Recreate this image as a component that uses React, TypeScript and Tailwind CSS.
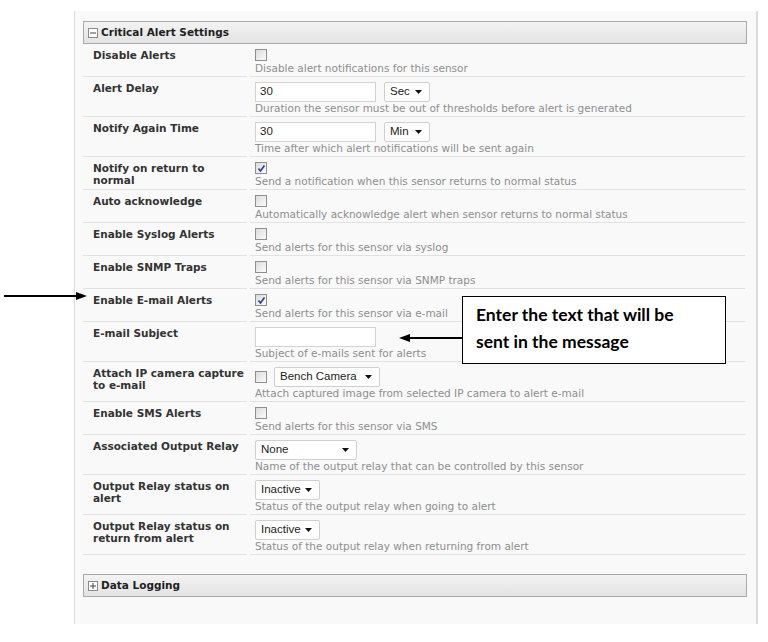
import type { ReactNode } from "react";

const labelFont = "font-['DejaVu_Sans',Verdana,sans-serif]";
const ctrlFont = "font-['Liberation_Sans',Arial,sans-serif]";

function Checkbox({ checked = false }: { checked?: boolean }) {
  return (
    <span className="flex h-[12px] w-[12px] items-center justify-center border border-[#8e8f8f] bg-gradient-to-br from-[#dcdcdc] to-[#fbfbfb]">
      {checked && (
        <svg width="9" height="9" viewBox="0 0 9 9">
          <path d="M1.5 4.5 L3.5 7 L7.5 1.5" fill="none" stroke="#2c3f8c" strokeWidth="1.6" />
        </svg>
      )}
    </span>
  );
}

function Select({ value, width }: { value: string; width: string }) {
  return (
    <span
      className={`flex h-[20px] items-center justify-between rounded-[2px] border border-[#cfcfcf] bg-white pl-[5px] pr-[7px] text-[11.5px] text-[#222] ${ctrlFont} ${width}`}
    >
      {value}
      <svg width="7" height="4" viewBox="0 0 7 4">
        <path d="M0 0 H7 L3.5 4 Z" fill="#111" />
      </svg>
    </span>
  );
}

function TextInput({ value = "" }: { value?: string }) {
  return (
    <span
      className={`flex h-[20px] w-[121px] items-center border border-[#d3d3d3] bg-white pl-[4px] text-[11.5px] text-[#222] ${ctrlFont}`}
    >
      {value}
    </span>
  );
}

type Row = { label: string[]; desc: string; control: ReactNode };

const rows: Row[] = [
  { label: ["Disable Alerts"], desc: "Disable alert notifications for this sensor", control: <Checkbox /> },
  {
    label: ["Alert Delay"],
    desc: "Duration the sensor must be out of thresholds before alert is generated",
    control: (
      <div className="flex gap-[8px]">
        <TextInput value="30" />
        <Select value="Sec" width="w-[46px]" />
      </div>
    ),
  },
  {
    label: ["Notify Again Time"],
    desc: "Time after which alert notifications will be sent again",
    control: (
      <div className="flex gap-[8px]">
        <TextInput value="30" />
        <Select value="Min" width="w-[46px]" />
      </div>
    ),
  },
  {
    label: ["Notify on return to", "normal"],
    desc: "Send a notification when this sensor returns to normal status",
    control: <Checkbox checked />,
  },
  {
    label: ["Auto acknowledge"],
    desc: "Automatically acknowledge alert when sensor returns to normal status",
    control: <Checkbox />,
  },
  { label: ["Enable Syslog Alerts"], desc: "Send alerts for this sensor via syslog", control: <Checkbox /> },
  { label: ["Enable SNMP Traps"], desc: "Send alerts for this sensor via SNMP traps", control: <Checkbox /> },
  { label: ["Enable E-mail Alerts"], desc: "Send alerts for this sensor via e-mail", control: <Checkbox checked /> },
  { label: ["E-mail Subject"], desc: "Subject of e-mails sent for alerts", control: <TextInput /> },
  {
    label: ["Attach IP camera capture", "to e-mail"],
    desc: "Attach captured image from selected IP camera to alert e-mail",
    control: (
      <div className="flex items-center gap-[7px]">
        <Checkbox />
        <Select value="Bench Camera" width="w-[106px]" />
      </div>
    ),
  },
  { label: ["Enable SMS Alerts"], desc: "Send alerts for this sensor via SMS", control: <Checkbox /> },
  {
    label: ["Associated Output Relay"],
    desc: "Name of the output relay that can be controlled by this sensor",
    control: <Select value="None" width="w-[102px]" />,
  },
  {
    label: ["Output Relay status on", "alert"],
    desc: "Status of the output relay when going to alert",
    control: <Select value="Inactive" width="w-[65px]" />,
  },
  {
    label: ["Output Relay status on", "return from alert"],
    desc: "Status of the output relay when returning from alert",
    control: <Select value="Inactive" width="w-[65px]" />,
  },
];

function SectionHeader({ title, open }: { title: string; open: boolean }) {
  return (
    <div className="flex h-[23px] items-center gap-[3px] border border-[#a9a9a9] bg-gradient-to-b from-[#f3f3f3] to-[#e3e3e3] pl-[4px]">
      <svg width="10" height="10" viewBox="0 0 10 10">
        <rect x="0.5" y="0.5" width="9" height="9" fill="#fff" stroke="#8a8a8a" />
        <path d="M2 5 H8" stroke="#444" />
        {!open && <path d="M5 2 V8" stroke="#444" />}
      </svg>
      <span className={`text-[10.5px] font-bold text-[#1e1e1e] ${labelFont}`}>{title}</span>
    </div>
  );
}

export default function App() {
  return (
    <div className="relative h-[642px] w-[768px] overflow-hidden bg-white">
      <div className="ml-[74px] mt-[11px] w-[684px] border-l border-r-2 border-[#dcdcdc] bg-[#f9f9f9] pb-[27px] pl-[8px] pr-[9px] pt-[10px]">
        <SectionHeader title="Critical Alert Settings" open />
        <div className={`grid grid-cols-[164px_1fr] gap-x-[3px] pr-[2px] ${labelFont}`}>
          {rows.map((row) => (
            <div key={row.label.join(" ")} className="contents">
              <div className="whitespace-nowrap border-b border-[#e2e2e2] pl-[10px] pt-[5px] text-[10.5px] font-bold leading-[12px] text-[#333]">
                {row.label.map((line) => (
                  <div key={line}>{line}</div>
                ))}
              </div>
              <div className="border-b border-[#e2e2e2] pb-[1px] pl-[5px] pt-[5px]">
                <div className="flex min-h-[13px] items-start">{row.control}</div>
                <p className="text-[10.5px] leading-[13px] text-[#8e8e8e]">{row.desc}</p>
              </div>
            </div>
          ))}
        </div>
        <div className="mt-[19px]">
          <SectionHeader title="Data Logging" open={false} />
        </div>
      </div>

      {/* annotation: arrow pointing at Enable E-mail Alerts */}
      <svg className="absolute left-[4px] top-[290px]" width="84" height="12" viewBox="0 0 84 12">
        <path d="M0 6 H74" stroke="#000" strokeWidth="2" />
        <path d="M72 2 L83 6 L72 10 Z" fill="#000" />
      </svg>

      {/* annotation: callout for e-mail subject */}
      <svg className="absolute left-[398px] top-[332px]" width="66" height="12" viewBox="0 0 66 12">
        <path d="M10 6 H66" stroke="#000" strokeWidth="2" />
        <path d="M12 2 L1 6 L12 10 Z" fill="#000" />
      </svg>
      <div className="absolute left-[462px] top-[296px] h-[68px] w-[264px] border border-black bg-white pl-[13px] pt-[4px] font-['Lato',sans-serif] text-[17.5px] font-bold leading-[27px] text-black">
        Enter the text that will be
        <br />
        sent in the message
      </div>
    </div>
  );
}
